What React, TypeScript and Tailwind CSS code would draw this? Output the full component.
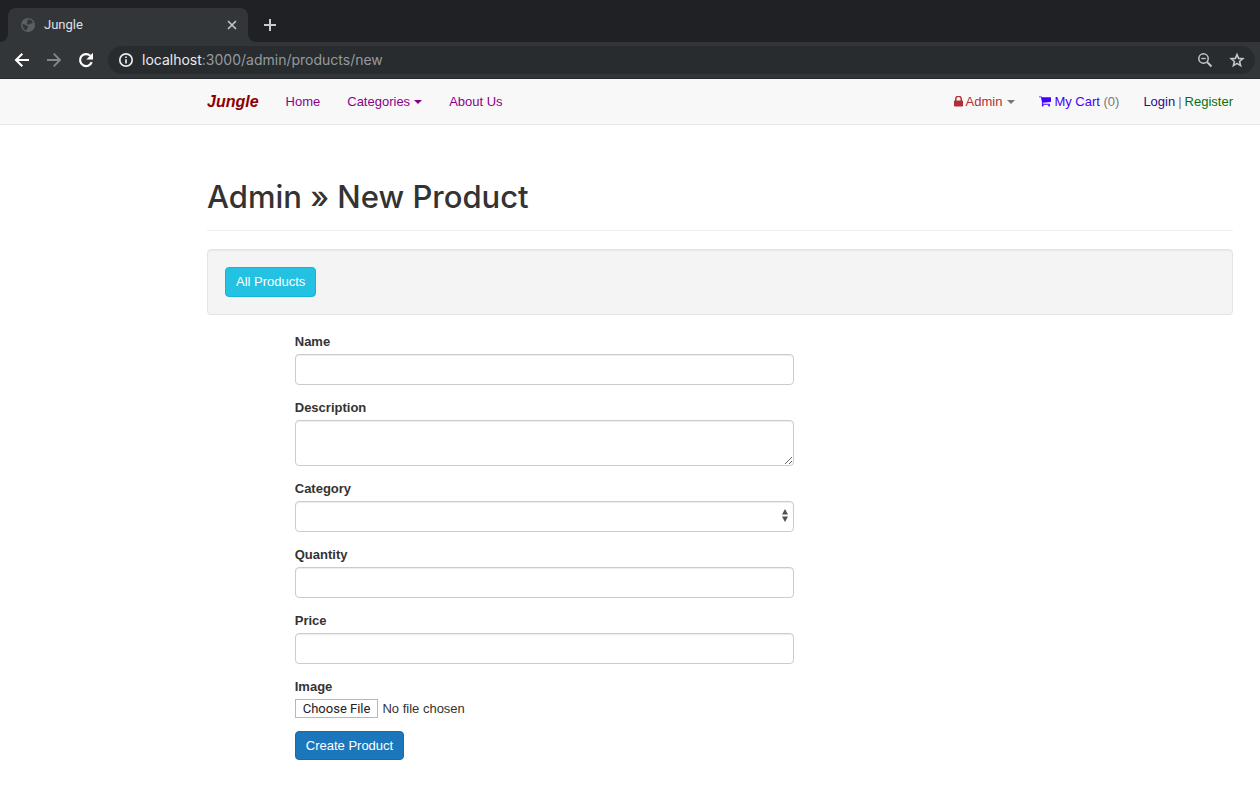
import { useId } from "react";
import type { ReactNode } from "react";

function LockIcon() {
  return (
    <svg viewBox="320 192 1152 1408" className="h-[11px] w-[9px]" fill="currentColor" aria-hidden="true">
      <path d="M640 768h512v-192q0-106-75-181t-181-75-181 75-75 181v192zm832 96v576q0 40-28 68t-68 28h-960q-40 0-68-28t-28-68v-576q0-40 28-68t68-28h32v-192q0-184 132-316t316-132 316 132 132 316v192h32q40 0 68 28t28 68z" />
    </svg>
  );
}

function CartIcon() {
  return (
    <svg viewBox="64 256 1664 1408" className="h-[11px] w-3" fill="currentColor" aria-hidden="true">
      <path d="M704 1536q0 52-38 90t-90 38-90-38-38-90 38-90 90-38 90 38 38 90zm896 0q0 52-38 90t-90 38-90-38-38-90 38-90 90-38 90 38 38 90zm128-1088v512q0 24-16.5 42.5t-40.5 21.5l-1044 122q13 60 13 70 0 16-24 64h920q26 0 45 19t19 45-19 45-45 19h-1024q-26 0-45-19t-19-45q0-11 8-31.5t16-36 21.5-40 15.5-29.5l-177-823h-204q-26 0-45-19t-19-45 19-45 45-19h256q16 0 28.5 6.5t19.5 15.5 13 24.5 8 26 5.5 29.5 4.5 26h1201q26 0 45 19t19 45z" />
    </svg>
  );
}

function GlobeIcon() {
  return (
    <svg viewBox="0 0 16 16" className="size-4 text-[#5b5f62]" aria-hidden="true">
      <circle cx="8" cy="8" r="7" fill="currentColor" />
      <path
        d="M8.200 2.300c2 .1 3.800 1.300 4.700 3.100-.3.900-1 1.200-1.700 1-.8-.2-1 .3-1.500.8-.8.700-1.900.5-2.500-.2-.5-.7.3-1.200.1-1.900-.2-.9.300-1.900.9-2.800zM2.400 7.400c1.300-.3 2.600.1 3.500.8.600.5 1.600.4 2 1.200.4.9-.6 1.400-.8 2.200-.2.700-.3 1.500-.9 1.800-2.200-.8-3.800-3-3.800-6z"
        fill="#323639"
      />
    </svg>
  );
}

function BackIcon() {
  return (
    <svg viewBox="0 0 20 20" className="size-5" fill="none" stroke="currentColor" strokeWidth="2.100" aria-hidden="true">
      <path d="M17 10H4.500M10.300 3.700L4 10l6.300 6.300" />
    </svg>
  );
}

function ForwardIcon() {
  return (
    <svg viewBox="0 0 20 20" className="size-5" fill="none" stroke="currentColor" strokeWidth="1.800" aria-hidden="true">
      <path d="M3 10h12.500M9.700 3.700L16 10l-6.300 6.300" />
    </svg>
  );
}

function ReloadIcon() {
  return (
    <svg viewBox="0 0 20 20" className="size-5" fill="none" stroke="currentColor" strokeWidth="2.200" aria-hidden="true">
      <path d="M15.700 12.100A6 6 0 1 1 14.300 5.800" />
      <path d="M17 2.800v6.700h-6.700z" fill="currentColor" stroke="none" />
    </svg>
  );
}

function InfoIcon() {
  return (
    <svg viewBox="0 0 16 16" className="size-4 text-[#e8eaed]" fill="none" stroke="currentColor" aria-hidden="true">
      <circle cx="8" cy="8" r="6.200" strokeWidth="1.700" />
      <path d="M8 7.200v4.300M8 4.500v1.600" strokeWidth="1.700" />
    </svg>
  );
}

function StarIcon() {
  return (
    <svg viewBox="0 0 18 18" className="size-[18px]" fill="none" stroke="currentColor" strokeWidth="1.600" aria-hidden="true">
      <path d="M9 3.500l1.600 3.900 4.200.35-3.200 2.750 1 4.100L9 12.400l-3.600 2.200 1-4.100L3.200 7.750l4.200-.35z" />
    </svg>
  );
}

function ZoomOutIcon() {
  return (
    <svg viewBox="0 0 16 16" className="size-4" fill="none" stroke="currentColor" aria-hidden="true">
      <circle cx="6.500" cy="6.500" r="4.700" strokeWidth="1.500" />
      <path d="M10 10l4.500 4.500" strokeWidth="1.900" />
      <path d="M4.300 6.500h4.400" strokeWidth="1.300" />
    </svg>
  );
}

function CloseIcon() {
  return (
    <svg viewBox="0 0 16 16" className="size-4" fill="none" stroke="currentColor" strokeWidth="1.600" aria-hidden="true">
      <path d="M4 4l8 8M12 4l-8 8" />
    </svg>
  );
}

function PlusIcon() {
  return (
    <svg viewBox="0 0 20 20" className="size-5" fill="none" stroke="currentColor" strokeWidth="2" aria-hidden="true">
      <path d="M10 4v12M4 10h12" />
    </svg>
  );
}

function Caret() {
  return (
    <svg viewBox="0 0 8 4" className="h-1 w-2" fill="currentColor" aria-hidden="true">
      <path d="M0 0h8L4 4z" />
    </svg>
  );
}

function BrowserChrome() {
  return (
    <header className="bg-[#202124] font-[Roboto,sans-serif]">
      <div className="flex items-end pt-2">
        <svg viewBox="0 0 8 8" className="size-2 text-[#323639]" fill="currentColor" aria-hidden="true">
          <path d="M8 0v8H0a8 8 0 0 0 8-8z" />
        </svg>
        <div className="flex h-[34px] w-60 items-center rounded-t-lg bg-[#323639] pr-2 pl-3 text-[#dfe1e4]">
          <GlobeIcon />
          <span className="ml-2 flex-1 text-[13px]">Jungle</span>
          <button type="button" aria-label="Close tab" className="text-[#c5c8cb]"><CloseIcon /></button>
        </div>
        <svg viewBox="0 0 8 8" className="size-2 text-[#323639]" fill="currentColor" aria-hidden="true">
          <path d="M0 0v8h8a8 8 0 0 1-8-8z" />
        </svg>
        <button type="button" aria-label="New tab" className="ml-1 flex h-[34px] w-5 items-center justify-center text-[#c8cacd]">
          <PlusIcon />
        </button>
      </div>
      <div className="flex h-[37px] items-center border-b border-[#25292b] bg-[#323639] pr-[5px] pl-3">
        <div className="flex items-center gap-3 text-white">
          <button type="button" aria-label="Back"><BackIcon /></button>
          <button type="button" aria-label="Forward" className="text-[#85888b]"><ForwardIcon /></button>
          <button type="button" aria-label="Reload"><ReloadIcon /></button>
        </div>
        <div className="ml-3 flex h-7 flex-1 items-center rounded-full bg-[#282c2f] pr-[9px] pl-[10px] font-[Inter,sans-serif] text-sm">
          <InfoIcon />
          <span className="ml-2 flex-1 text-[#969a9e]">
            <span className="text-[#e8eaed]">localhost</span>:3000/admin/products/new
          </span>
          <button type="button" aria-label="Zoom" className="text-[#c3c6ca]"><ZoomOutIcon /></button>
          <button type="button" aria-label="Bookmark" className="ml-[15px] text-[#c3c6ca]"><StarIcon /></button>
        </div>
      </div>
    </header>
  );
}

function SiteNav() {
  return (
    <nav className="flex h-[46px] items-center justify-between border-b border-[#e7e7e7] bg-[#f8f8f8] pr-[27px] pl-[207px]">
      <div className="flex items-center gap-[27px] text-[#8b008b]">
        <a href="#" className="text-base font-bold text-[#8b0000] italic">Jungle</a>
        <a href="#">Home</a>
        <a href="#" className="flex items-center gap-1">Categories <Caret /></a>
        <a href="#">About Us</a>
      </div>
      <div className="flex items-center gap-6 text-[#777777]">
        <a href="#" className="flex items-center gap-[3px] text-[#b22f35]">
          <LockIcon />
          Admin
          <span className="ml-[2px] text-[#777777]"><Caret /></span>
        </a>
        <a href="#" className="flex items-center gap-[3px]">
          <span className="text-[#4400ff]"><CartIcon /></span>
          <span><span className="text-[#4400ff]">My Cart</span> (0)</span>
        </a>
        <span className="flex gap-[3px]">
          <a href="#" className="text-[#2b0a8c]">Login</a>
          <span>|</span>
          <a href="#" className="text-[#0a700a]">Register</a>
        </span>
      </div>
    </nav>
  );
}

function Field({ label, children }: { label: string; children: (id: string) => ReactNode }) {
  const id = useId();
  return (
    <div className="mb-[13px] flex flex-col gap-[3px]">
      <label htmlFor={id} className="self-start leading-[19px] font-bold">{label}</label>
      {children(id)}
    </div>
  );
}

const control =
  "block w-full rounded-[4px] border border-[#cccccc] bg-white px-[11px] py-[5px] shadow-[inset_0_1px_1px_rgba(0,0,0,0.075)]";

function ProductForm() {
  return (
    <form className="grid grid-cols-12 gap-x-[27px]" onSubmit={(e) => e.preventDefault()}>
      <div className="col-span-6 col-start-2">
        <Field label="Name">{(id) => <input id={id} type="text" className={`${control} h-[31px]`} />}</Field>
        <Field label="Description">{(id) => <textarea id={id} className={`${control} h-[46px] resize`} />}</Field>
        <Field label="Category">
          {(id) => (
            <div className="relative">
              <select id={id} className={`${control} h-[31px] appearance-none`}>
                <option value=""></option>
              </select>
              <svg viewBox="0 0 6 13" className="pointer-events-none absolute top-2 right-[6px] h-[13px] w-[6px]" fill="#505050" aria-hidden="true">
                <path d="M0 5.500L3 0l3 5.500zM0 7.500h6L3 13z" />
              </svg>
            </div>
          )}
        </Field>
        <Field label="Quantity">{(id) => <input id={id} type="text" className={`${control} h-[31px]`} />}</Field>
        <Field label="Price">{(id) => <input id={id} type="text" className={`${control} h-[31px]`} />}</Field>
        <Field label="Image">
          {(id) => (
            <input
              id={id}
              type="file"
              className="block h-[19px] w-full leading-4 file:mr-1 file:h-[19px] file:border file:border-solid file:border-[#b8b8b8] file:bg-white file:px-[7px] file:py-0 file:font-[Roboto,sans-serif] file:text-[13px] file:leading-4 file:text-[#222222]"
            />
          )}
        </Field>
        <button type="submit" className="h-[29px] rounded-[4px] border border-[#1a69a8] bg-[#1c76bc] px-[10px] text-white">
          Create Product
        </button>
      </div>
    </form>
  );
}

export default function App() {
  return (
    <div className="min-h-screen bg-white text-[13px] leading-[18px] text-[#333333] font-['Liberation_Sans',Arial,sans-serif]">
      <BrowserChrome />
      <SiteNav />
      <main className="mr-[27px] ml-[207px] pt-[53px] pb-7">
        <h1 className="mb-[18px] border-b border-[#eeeeee] pb-[14px] font-[Inter,sans-serif] text-[31px] leading-[38px] font-medium">
          Admin » New Product
        </h1>
        <div className="mb-[17px] rounded-[4px] border border-[#e3e3e3] bg-[#f4f4f4] p-[17px] shadow-[inset_0_1px_1px_rgba(0,0,0,0.05)]">
          <a href="#" className="inline-flex h-[30px] items-center rounded-[4px] border border-[#12b4da] bg-[#23c2e2] px-[10px] align-top text-white">
            All Products
          </a>
        </div>
        <ProductForm />
      </main>
    </div>
  );
}
